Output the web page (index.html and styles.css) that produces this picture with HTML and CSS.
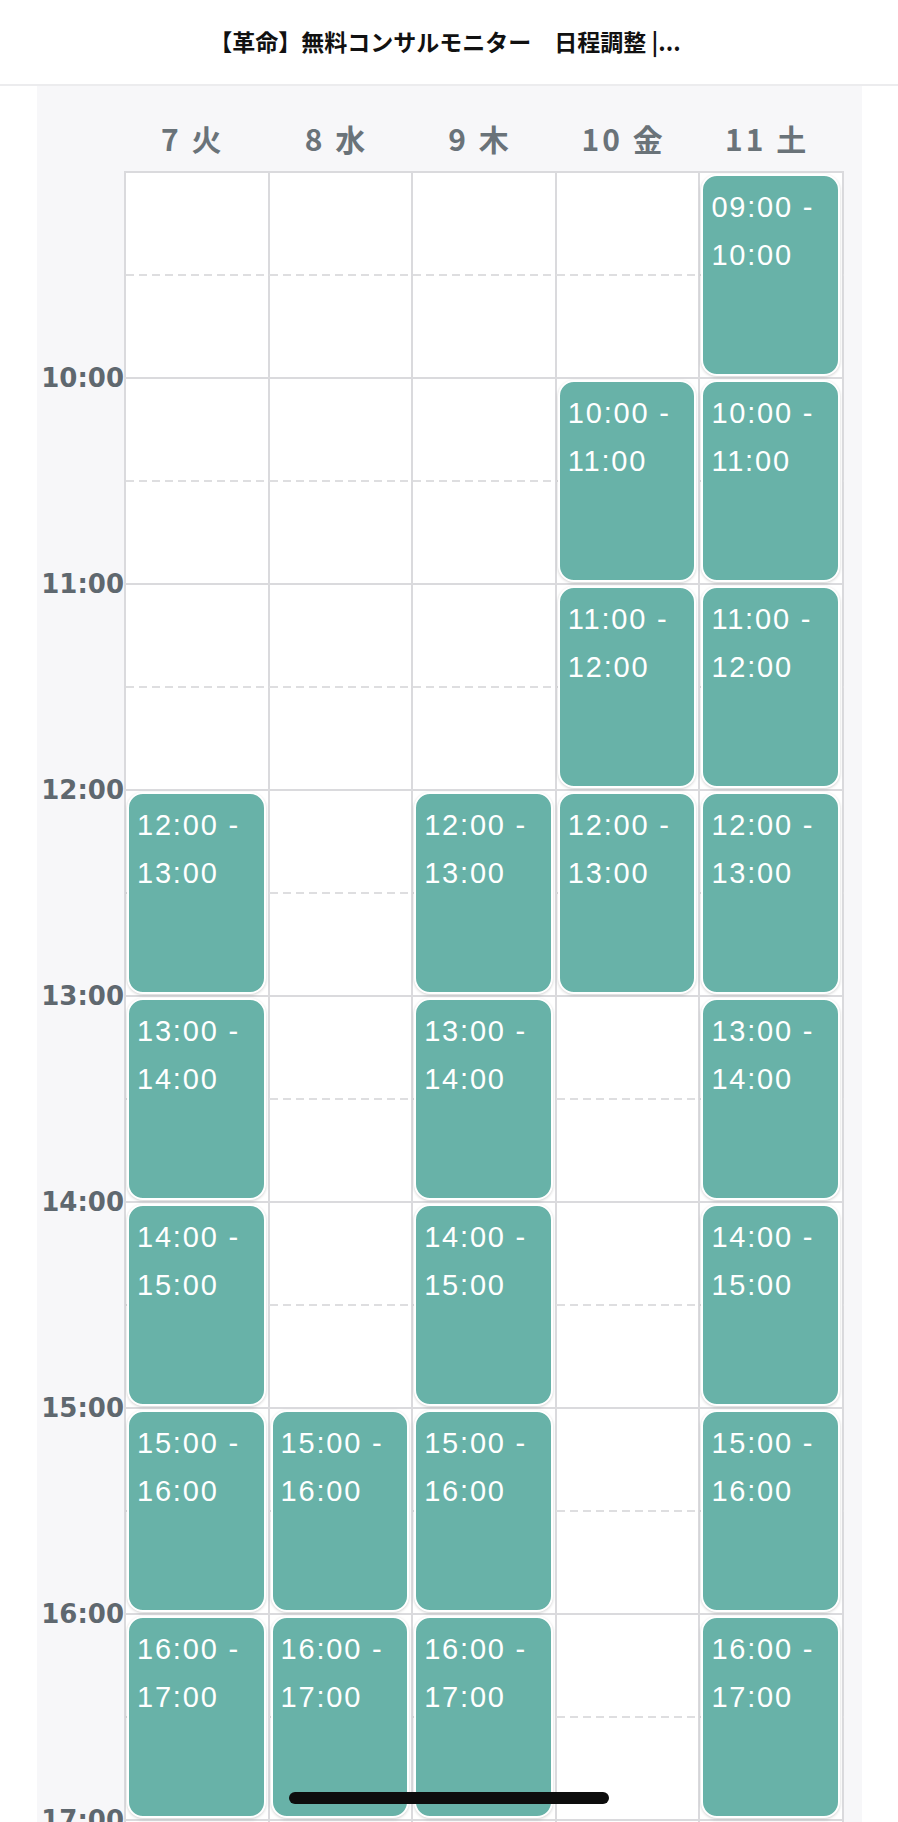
FILE: index.html
```html
<!DOCTYPE html>
<html lang="ja">
<head>
  <meta charset="UTF-8" />
  <title>日程調整</title>
  <link rel="stylesheet" href="styles.css">
</head>
<body>

<header class="topbar">
  <h1 class="title">【革命】無料コンサルモニター　日程調整 |...</h1>
</header>

<main class="panel">
  <div class="days">
    <div class="day">7 火</div>
    <div class="day">8 水</div>
    <div class="day">9 木</div>
    <div class="day">10 金</div>
    <div class="day">11 土</div>
  </div>

  <div class="week">
    <div class="times">
      <div class="tlabel">10:00</div>
      <div class="tlabel">11:00</div>
      <div class="tlabel">12:00</div>
      <div class="tlabel">13:00</div>
      <div class="tlabel">14:00</div>
      <div class="tlabel">15:00</div>
      <div class="tlabel">16:00</div>
      <div class="tlabel">17:00</div>
    </div>

    <div class="grid">
      <!-- 7 火 -->
      <div class="col">
        <div class="slot"></div>
        <div class="slot"></div>
        <div class="slot"></div>
        <div class="slot"><div class="ev">12:00 -<br>13:00</div></div>
        <div class="slot"><div class="ev">13:00 -<br>14:00</div></div>
        <div class="slot"><div class="ev">14:00 -<br>15:00</div></div>
        <div class="slot"><div class="ev">15:00 -<br>16:00</div></div>
        <div class="slot"><div class="ev">16:00 -<br>17:00</div></div>
        <div class="slot"><div class="ev"></div></div>
      </div>
      <!-- 8 水 -->
      <div class="col">
        <div class="slot"></div>
        <div class="slot"></div>
        <div class="slot"></div>
        <div class="slot"></div>
        <div class="slot"></div>
        <div class="slot"></div>
        <div class="slot"><div class="ev">15:00 -<br>16:00</div></div>
        <div class="slot"><div class="ev">16:00 -<br>17:00</div></div>
        <div class="slot"><div class="ev"></div></div>
      </div>
      <!-- 9 木 -->
      <div class="col">
        <div class="slot"></div>
        <div class="slot"></div>
        <div class="slot"></div>
        <div class="slot"><div class="ev">12:00 -<br>13:00</div></div>
        <div class="slot"><div class="ev">13:00 -<br>14:00</div></div>
        <div class="slot"><div class="ev">14:00 -<br>15:00</div></div>
        <div class="slot"><div class="ev">15:00 -<br>16:00</div></div>
        <div class="slot"><div class="ev">16:00 -<br>17:00</div></div>
        <div class="slot"><div class="ev"></div></div>
      </div>
      <!-- 10 金 -->
      <div class="col">
        <div class="slot"></div>
        <div class="slot"><div class="ev">10:00 -<br>11:00</div></div>
        <div class="slot"><div class="ev">11:00 -<br>12:00</div></div>
        <div class="slot"><div class="ev">12:00 -<br>13:00</div></div>
        <div class="slot"></div>
        <div class="slot"></div>
        <div class="slot"></div>
        <div class="slot"></div>
        <div class="slot"></div>
      </div>
      <!-- 11 土 -->
      <div class="col">
        <div class="slot"><div class="ev">09:00 -<br>10:00</div></div>
        <div class="slot"><div class="ev">10:00 -<br>11:00</div></div>
        <div class="slot"><div class="ev">11:00 -<br>12:00</div></div>
        <div class="slot"><div class="ev">12:00 -<br>13:00</div></div>
        <div class="slot"><div class="ev">13:00 -<br>14:00</div></div>
        <div class="slot"><div class="ev">14:00 -<br>15:00</div></div>
        <div class="slot"><div class="ev">15:00 -<br>16:00</div></div>
        <div class="slot"><div class="ev">16:00 -<br>17:00</div></div>
        <div class="slot"><div class="ev"></div></div>
      </div>
    </div>
  </div>
</main>

<div class="home-bar"></div>

</body>
</html>
```

FILE: styles.css
```css
html, body {
  margin: 0;
  padding: 0;
  background: #fff;
  height: 1822px;
  overflow: hidden;
}
body {
  font-family: "Noto Sans CJK JP", "Noto Sans", sans-serif;
  color: #1e1e1e;
}

.topbar {
  height: 84px;
  border-bottom: 2px solid #ececee;
  display: flex;
  align-items: center;
  justify-content: center;
}
.title {
  margin: 0 8px 2px 0;
  font-size: 23px;
  font-weight: 700;
  color: #111;
  white-space: nowrap;
}

.panel {
  margin-left: 37px;
  width: 825px;
  background: #f7f7f9;
}

.days {
  height: 85px;
  box-sizing: border-box;
  padding: 35px 0 0 84px;
  display: grid;
  grid-template-columns: repeat(5, 143.6px);
}
.day {
  text-align: center;
  font-family: "Noto Sans CJK JP", sans-serif;
  font-size: 30px;
  font-weight: 700;
  line-height: 34px;
  letter-spacing: 3px;
  color: #6a7379;
}

.week {
  display: flex;
}
.times {
  width: 87px;
  padding-top: 104px;
}
.tlabel {
  height: 206px;
  line-height: 206px;
  text-align: right;
  font-family: "DejaVu Sans", sans-serif;
  font-size: 26px;
  font-weight: 700;
  color: #5f686f;
}

.grid {
  width: 720px;
  box-sizing: border-box;
  display: grid;
  grid-template-columns: repeat(5, 1fr);
  border-left: 2px solid #dadadd;
  border-top: 2px solid #dadadd;
  background: #fff;
}
.col {
  border-right: 2px solid #dadadd;
}
.slot {
  position: relative;
  height: 206px;
  box-sizing: border-box;
  border-bottom: 2px solid #dadadd;
  display: flex;
}
.slot::before {
  content: "";
  position: absolute;
  left: 0;
  right: -2px;
  top: 101px;
  height: 2px;
  background: repeating-linear-gradient(to right, #dedee0 0 8px, transparent 8px 13px);
}

.ev {
  position: relative;
  flex: 1;
  margin: 1px 2px 1px 1px;
  padding: 7px 8px;
  border: 2px solid #fff;
  border-radius: 16px;
  background: #68b2a8;
  box-shadow: 0 1px 3px rgba(0, 0, 0, 0.18);
  color: #fff;
  font-family: "Liberation Sans", Arial, sans-serif;
  font-size: 29px;
  line-height: 48px;
  letter-spacing: 1.8px;
}

.home-bar {
  position: fixed;
  left: 289px;
  bottom: 18px;
  width: 320px;
  height: 12px;
  border-radius: 6px;
  background: #0d0d0d;
}
```
